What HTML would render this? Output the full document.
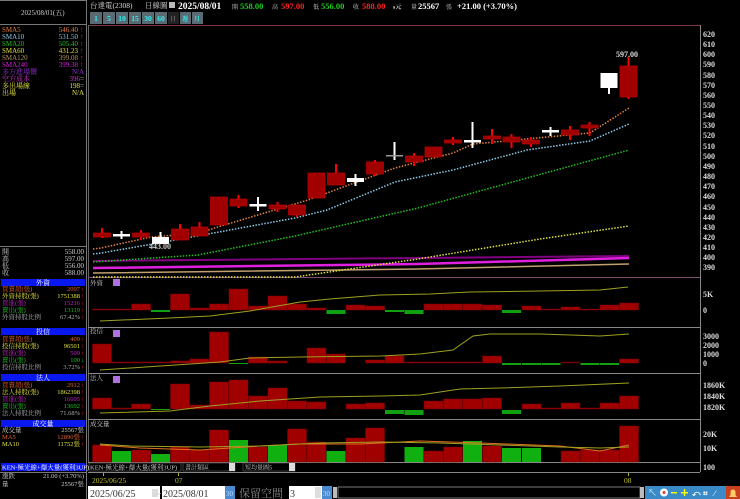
<!DOCTYPE html>
<html><head><meta charset="utf-8"><style>
html,body{margin:0;padding:0;background:#000;width:740px;height:499px;overflow:hidden}
svg{display:block}
text{font-family:"Liberation Serif","Noto Serif CJK SC","Noto Sans CJK TC",serif;}
.a{font-family:"Liberation Sans",sans-serif;font-weight:bold;font-size:8px;fill:#ddd}
.s{font-size:7px}
</style></head><body>
<svg width="740" height="499" viewBox="0 0 740 499" xmlns="http://www.w3.org/2000/svg">
<rect width="740" height="499" fill="#000"/>
<!-- left panel frames -->
<line x1="86.5" y1="0" x2="86.5" y2="499" stroke="#777"/>
<line x1="0" y1="24.5" x2="86" y2="24.5" stroke="#777"/>
<line x1="0" y1="0.5" x2="86" y2="0.5" stroke="#777"/>
<text x="21" y="15" class="s" fill="#ccc">2025/08/01(五)</text>
<g class="s" font-size="7">
<text x="2" y="32" fill="#e08040">SMA5</text><text x="78" y="32" fill="#e08040" text-anchor="end">546.40</text><text x="80" y="32" fill="#f22">↑</text>
<text x="2" y="39" fill="#8ac8e8">SMA10</text><text x="78" y="39" fill="#8ac8e8" text-anchor="end">531.50</text><text x="80" y="39" fill="#f22">↑</text>
<text x="2" y="46" fill="#20c020">SMA20</text><text x="78" y="46" fill="#20c020" text-anchor="end">505.40</text><text x="80" y="46" fill="#f22">↑</text>
<text x="2" y="53" fill="#e0e040">SMA60</text><text x="78" y="53" fill="#e0e040" text-anchor="end">431.23</text><text x="80" y="53" fill="#f22">↑</text>
<text x="2" y="60" fill="#b09060">SMA120</text><text x="78" y="60" fill="#b09060" text-anchor="end">399.08</text><text x="80" y="60" fill="#f22">↑</text>
<text x="2" y="67" fill="#d020d0">SMA240</text><text x="78" y="67" fill="#d020d0" text-anchor="end">399.38</text><text x="80" y="67" fill="#f22">↑</text>
<text x="2" y="74" fill="#9030d0">多方進場價</text><text x="84" y="74" fill="#9030d0" text-anchor="end">N/A</text>
<text x="2" y="81" fill="#d030d0">空方成本</text><text x="80" y="81" fill="#d030d0" text-anchor="end">396</text><text x="84" y="81" fill="#ccc" text-anchor="end">=</text>
<text x="2" y="88" fill="#e0e040">多出場線</text><text x="80" y="88" fill="#e0e040" text-anchor="end">198</text><text x="84" y="88" fill="#ccc" text-anchor="end">=</text>
<text x="2" y="95" fill="#e0e040">出場</text><text x="84" y="95" fill="#e0e040" text-anchor="end">N/A</text>
</g>
<line x1="0" y1="246.5" x2="86" y2="246.5" stroke="#777"/>
<g font-size="7" fill="#ccc">
<text x="2" y="254">開</text><text x="84" y="254" text-anchor="end">558.00</text>
<text x="2" y="261">高</text><text x="84" y="261" text-anchor="end">597.00</text>
<text x="2" y="268">低</text><text x="84" y="268" text-anchor="end">556.00</text>
<text x="2" y="275">收</text><text x="84" y="275" text-anchor="end">588.00</text>
</g>
<!-- section headers -->
<g>
<rect x="1" y="279" width="84" height="7" fill="#0a18f0"/><text x="43" y="285" font-size="7" fill="#fff" text-anchor="middle">外資</text>
<rect x="1" y="328" width="84" height="7" fill="#0a18f0"/><text x="43" y="334" font-size="7" fill="#fff" text-anchor="middle">投信</text>
<rect x="1" y="374" width="84" height="7" fill="#0a18f0"/><text x="43" y="380" font-size="7" fill="#fff" text-anchor="middle">法人</text>
<rect x="1" y="420" width="84" height="7" fill="#0a18f0"/><text x="43" y="426" font-size="7" fill="#fff" text-anchor="middle">成交量</text>
<rect x="1" y="463" width="84" height="8" fill="#0a18f0"/><text x="2" y="469.5" font-size="6.5" fill="#fff">KEN-極光線+爆大量(獲利3UP)</text>
</g>
<g font-size="6.5">
<text x="2" y="291" fill="#e06030">買賣超(張)</text><text x="80" y="291" fill="#e06030" text-anchor="end">2097</text><text x="81" y="291" fill="#f22">↑</text>
<text x="2" y="298" fill="#e0e040">外資持股(張)</text><text x="80" y="298" fill="#e0e040" text-anchor="end">1751388</text><text x="81" y="298" fill="#f22">↑</text>
<text x="2" y="305" fill="#c020c0">買進(張)</text><text x="80" y="305" fill="#c020c0" text-anchor="end">15216</text><text x="81" y="305" fill="#f22">↑</text>
<text x="2" y="312" fill="#20c020">賣出(張)</text><text x="80" y="312" fill="#20c020" text-anchor="end">13119</text><text x="81" y="312" fill="#f22">↑</text>
<text x="2" y="319" fill="#aaa">外資持股比例</text><text x="80" y="319" fill="#aaa" text-anchor="end">67.42%</text><text x="81" y="319" fill="#f22">↑</text>
<text x="2" y="341" fill="#e06030">買賣超(張)</text><text x="80" y="341" fill="#e06030" text-anchor="end">409</text><text x="81" y="341" fill="#f22">↑</text>
<text x="2" y="348" fill="#e0e040">投信持股(張)</text><text x="80" y="348" fill="#e0e040" text-anchor="end">96501</text><text x="81" y="348" fill="#f22">↑</text>
<text x="2" y="355" fill="#c020c0">買進(張)</text><text x="80" y="355" fill="#c020c0" text-anchor="end">509</text><text x="81" y="355" fill="#f22">↑</text>
<text x="2" y="362" fill="#20c020">賣出(張)</text><text x="80" y="362" fill="#20c020" text-anchor="end">100</text><text x="81" y="362" fill="#2c2">↓</text>
<text x="2" y="369" fill="#aaa">投信持股比例</text><text x="80" y="369" fill="#aaa" text-anchor="end">3.72%</text><text x="81" y="369" fill="#f22">↑</text>
<text x="2" y="387" fill="#e06030">買賣超(張)</text><text x="80" y="387" fill="#e06030" text-anchor="end">2912</text><text x="81" y="387" fill="#f22">↑</text>
<text x="2" y="394" fill="#e0e040">法人持股(張)</text><text x="80" y="394" fill="#e0e040" text-anchor="end">1862398</text><text x="81" y="394" fill="#f22">↑</text>
<text x="2" y="401" fill="#c020c0">買進(張)</text><text x="80" y="401" fill="#c020c0" text-anchor="end">16605</text><text x="81" y="401" fill="#f22">↑</text>
<text x="2" y="408" fill="#20c020">賣出(張)</text><text x="80" y="408" fill="#20c020" text-anchor="end">13692</text><text x="81" y="408" fill="#f22">↑</text>
<text x="2" y="415" fill="#aaa">法人持股比例</text><text x="80" y="415" fill="#aaa" text-anchor="end">71.68%</text><text x="81" y="415" fill="#f22">↑</text>
<text x="2" y="432" fill="#ccc">成交量</text><text x="84" y="432" fill="#ccc" text-anchor="end">25567張</text>
<text x="2" y="439" fill="#e06030">MA5</text><text x="80" y="439" fill="#e06030" text-anchor="end">12890張</text><text x="81" y="439" fill="#f22">↑</text>
<text x="2" y="446" fill="#e0e040">MA10</text><text x="80" y="446" fill="#e0e040" text-anchor="end">11752張</text><text x="81" y="446" fill="#f22">↑</text>
<text x="2" y="478" fill="#ccc">漲跌</text><text x="84" y="478" fill="#ccc" text-anchor="end">21.00 (+3.70%)</text>
<text x="2" y="486" fill="#ccc">量</text><text x="84" y="486" fill="#ccc" text-anchor="end">25567張</text>
</g>
<line x1="0" y1="472.5" x2="86" y2="472.5" stroke="#777"/>

<!-- top bar -->
<g font-size="7.5" fill="#ddd">
<text x="90" y="8">台達電(2308)</text>
<text x="145" y="8">日線圖</text>
</g>
<rect x="169" y="2" width="6" height="6" fill="#bbb"/>
<g font-family="Liberation Sans" font-weight="bold" font-size="8.5">
<text x="178" y="9" fill="#fff" font-size="9.5">2025/08/01</text>
<text x="232" y="9" fill="#ccc" font-size="6" font-weight="normal">開</text><text x="240" y="9" fill="#2c2">558.00</text>
<text x="272" y="9" fill="#ccc" font-size="6" font-weight="normal">高</text><text x="281" y="9" fill="#f22">597.00</text>
<text x="313" y="9" fill="#ccc" font-size="6" font-weight="normal">低</text><text x="321" y="9" fill="#2c2">556.00</text>
<text x="353" y="9" fill="#ccc" font-size="6" font-weight="normal">收</text><text x="362" y="9" fill="#f22">588.00</text>
<text x="393" y="9" fill="#ccc" font-size="6">s元</text>
<text x="411" y="9" fill="#ccc" font-size="6" font-weight="normal">量</text><text x="418" y="9" fill="#fff">25567</text>
<text x="446" y="9" fill="#ccc" font-size="6" font-weight="normal">張</text>
<text x="457" y="9" fill="#fff">+21.00 (+3.70%)</text>
</g>
<g font-family="Liberation Sans" font-weight="bold" font-size="7.5" fill="#3ee">
<rect x="90" y="12" width="12" height="12" fill="#5a6a72"/><text x="96" y="21" text-anchor="middle">1</text>
<rect x="103" y="12" width="12" height="12" fill="#5a6a72"/><text x="109" y="21" text-anchor="middle">5</text>
<rect x="116" y="12" width="12" height="12" fill="#5a6a72"/><text x="122" y="21" text-anchor="middle">10</text>
<rect x="129" y="12" width="12" height="12" fill="#5a6a72"/><text x="135" y="21" text-anchor="middle">15</text>
<rect x="142" y="12" width="12" height="12" fill="#5a6a72"/><text x="148" y="21" text-anchor="middle">30</text>
<rect x="155" y="12" width="12" height="12" fill="#5a6a72"/><text x="161" y="21" text-anchor="middle">60</text>
<rect x="168" y="12" width="11" height="12" fill="#222"/><text x="173" y="21" text-anchor="middle" font-size="6" fill="#666">日</text>
<rect x="180" y="12" width="11" height="12" fill="#5a6a72"/><text x="185" y="21" text-anchor="middle" font-size="6">週</text>
<rect x="192" y="12" width="11" height="12" fill="#5a6a72"/><text x="197" y="21" text-anchor="middle" font-size="6">月</text>
</g>

<!-- chart frames -->
<line x1="88" y1="25.5" x2="700" y2="25.5" stroke="#803050"/>
<line x1="88.5" y1="25" x2="88.5" y2="462" stroke="#666"/>
<line x1="700.5" y1="25" x2="700.5" y2="472" stroke="#888"/>
<line x1="88" y1="277.5" x2="700" y2="277.5" stroke="#805070"/>
<line x1="88" y1="327.5" x2="700" y2="327.5" stroke="#888"/>
<line x1="88" y1="373.5" x2="700" y2="373.5" stroke="#888"/>
<line x1="88" y1="419.5" x2="700" y2="419.5" stroke="#888"/>
<line x1="88" y1="462.5" x2="700" y2="462.5" stroke="#888"/>
<line x1="88" y1="472.5" x2="700" y2="472.5" stroke="#888"/>

<!-- price axis -->
<g class="a">
<text x="703" y="37">620</text><text x="703" y="47">610</text><text x="703" y="57">600</text><text x="703" y="67">590</text><text x="703" y="78">580</text><text x="703" y="88">570</text><text x="703" y="98">560</text><text x="703" y="108">550</text><text x="703" y="118">540</text><text x="703" y="128">530</text><text x="703" y="138">520</text><text x="703" y="149">510</text><text x="703" y="159">500</text><text x="703" y="169">490</text><text x="703" y="179">480</text><text x="703" y="189">470</text><text x="703" y="199">460</text><text x="703" y="210">450</text><text x="703" y="220">440</text><text x="703" y="230">430</text><text x="703" y="240">420</text><text x="703" y="250">410</text><text x="703" y="260">400</text><text x="703" y="270">390</text>
<text x="703" y="297">5K</text><text x="703" y="313">0</text>
<text x="703" y="339">3000</text><text x="703" y="348">2000</text><text x="703" y="357">1000</text><text x="703" y="366">0</text>
<text x="703" y="388">1860K</text><text x="703" y="399">1840K</text><text x="703" y="410">1820K</text>
<text x="703" y="437">20K</text><text x="703" y="451">10K</text><text x="703" y="470">100</text>
</g>

<!-- long MA lines -->
<polyline points="93,261 629,256" fill="none" stroke="#800080" stroke-width="2"/>
<polyline points="93,268 418,264 629,258" fill="none" stroke="#e020e0" stroke-width="2.5"/>
<polyline points="93,273 418,269 629,264" fill="none" stroke="#c0a070" stroke-width="1.5"/>
<g fill="none" stroke-width="1.5" stroke-dasharray="1.5,1.5">
<polyline points="93,277 295,277 418,259 540,239 629,226" stroke="#e0e040"/>
<polyline points="93,262 198,255 295,236 418,208 629,150" stroke="#20c020"/>
<polyline points="93,254 101,253 170,241 295,218 327,210 395,182 453,170 527,150 590,141 629,124" stroke="#8ac8e8"/>
<polyline points="93,249 101,248 151,237 199,233 221,226 308,200 395,168 453,153 473,144 590,133 629,108" stroke="#e08040"/>
</g>

<!-- candles -->
<g stroke-width="2">
<g stroke="#f00">
<line x1="102" y1="228" x2="102" y2="238"/><line x1="141" y1="230" x2="141" y2="240"/><line x1="180" y1="224" x2="180" y2="240"/><line x1="199.5" y1="222" x2="199.5" y2="236"/><line x1="238.5" y1="195" x2="238.5" y2="208"/><line x1="277.5" y1="202" x2="277.5" y2="212"/><line x1="297" y1="205" x2="297" y2="217"/><line x1="336" y1="164" x2="336" y2="185"/><line x1="375" y1="160" x2="375" y2="176"/><line x1="414" y1="153" x2="414" y2="166"/><line x1="453" y1="137" x2="453" y2="145"/><line x1="492" y1="129" x2="492" y2="144"/><line x1="511.5" y1="134" x2="511.5" y2="148"/><line x1="531" y1="137" x2="531" y2="147"/><line x1="570" y1="126" x2="570" y2="140"/><line x1="589.5" y1="122" x2="589.5" y2="136"/><line x1="628.5" y1="57" x2="628.5" y2="99"/>
</g>
<g stroke="#fff">
<line x1="121.5" y1="231" x2="121.5" y2="239"/><line x1="160.5" y1="232" x2="160.5" y2="244"/><line x1="258" y1="197" x2="258" y2="211"/><line x1="355.5" y1="174" x2="355.5" y2="186"/><line x1="394.5" y1="142" x2="394.5" y2="160"/><line x1="472.5" y1="122" x2="472.5" y2="148"/><line x1="550.5" y1="127" x2="550.5" y2="136"/><line x1="609" y1="73" x2="609" y2="94"/>
</g>
</g>
<g fill="#a00000" stroke="#c00000" stroke-width="0.7">
<rect x="93.5" y="233" width="17" height="4"/><rect x="132.5" y="233" width="17" height="4"/><rect x="171.5" y="229" width="17" height="11"/><rect x="191" y="227" width="17" height="9"/><rect x="210.5" y="197" width="17" height="28"/><rect x="230" y="199" width="17" height="7"/><rect x="269" y="205" width="17" height="4"/><rect x="288.5" y="205" width="17" height="10"/><rect x="308" y="173" width="17" height="25"/><rect x="327.5" y="173" width="17" height="12"/><rect x="366.5" y="162" width="17" height="12"/><rect x="405.5" y="156" width="17" height="6"/><rect x="425" y="147" width="17" height="10"/><rect x="444.5" y="140" width="17" height="3"/><rect x="483.5" y="136" width="17" height="3"/><rect x="503" y="137" width="17" height="5"/><rect x="522.5" y="140" width="17" height="4"/><rect x="561.5" y="130" width="17" height="5"/><rect x="581" y="125" width="17" height="3"/><rect x="620" y="66" width="17" height="31"/>
</g>
<g fill="#fff">
<rect x="113" y="234" width="17" height="2.5"/><rect x="152" y="237" width="17" height="7"/><rect x="249.5" y="204" width="17" height="2.5"/><rect x="347" y="178" width="17" height="4"/><rect x="386" y="155" width="17" height="1.5" fill="#999"/><rect x="464" y="140" width="17" height="2.5"/><rect x="542" y="130" width="17" height="2.5"/><rect x="600.5" y="73" width="17" height="15"/>
</g>
<text x="149" y="249" font-family="Liberation Sans" font-size="8" font-weight="bold" fill="#ccc">443.00</text>
<text x="616" y="57" font-family="Liberation Sans" font-size="8" font-weight="bold" fill="#ddd">597.00</text>

<!-- sub panel labels -->
<g font-size="6.5" fill="#ccc">
<text x="90" y="285">外資</text><rect x="113" y="279" width="7" height="7" fill="#b070e0"/>
<text x="90" y="333">投信</text><rect x="113" y="330" width="7" height="7" fill="#b070e0"/>
<text x="90" y="380">法人</text><rect x="113" y="376" width="7" height="7" fill="#b070e0"/>
<text x="90" y="426">成交量</text>
</g>

<!-- 外資 bars zero 310 -->
<g fill="#a00000" stroke="#700" stroke-width="0.5">
<rect x="92.5" y="309" width="19" height="1"/><rect x="112" y="309" width="19" height="1"/><rect x="131.5" y="304" width="19" height="6"/><rect x="170.5" y="294" width="19" height="16"/><rect x="190" y="308" width="19" height="2"/><rect x="209.5" y="304" width="19" height="6"/><rect x="229" y="289" width="19" height="21"/><rect x="248.5" y="306" width="19" height="4"/><rect x="268" y="296" width="19" height="14"/><rect x="287.5" y="304" width="19" height="6"/><rect x="307" y="308" width="19" height="2"/><rect x="346" y="305" width="19" height="5"/><rect x="365.5" y="306" width="19" height="4"/><rect x="424" y="304" width="19" height="6"/><rect x="443.5" y="304" width="19" height="6"/><rect x="463" y="304" width="19" height="6"/><rect x="482.5" y="305" width="19" height="5"/><rect x="522" y="306" width="19" height="4"/><rect x="541.5" y="309" width="19" height="1"/><rect x="561" y="307" width="19" height="3"/><rect x="580.5" y="309" width="19" height="1"/><rect x="600" y="305" width="19" height="5"/><rect x="619.5" y="303" width="19" height="7"/>
</g>
<g fill="#10a010">
<rect x="151" y="310" width="19" height="2"/><rect x="326.5" y="310" width="19" height="4"/><rect x="385" y="310" width="19" height="2"/><rect x="404.5" y="310" width="19" height="4"/><rect x="502" y="310" width="19" height="3"/>
</g>
<polyline points="100,321 170,318 210,316 250,311 300,302 330,299 380,295 430,294 470,292 540,291 600,290 628,287" fill="none" stroke="#a0a020" stroke-width="1"/>

<!-- 投信 zero 363 -->
<g fill="#a00000" stroke="#700" stroke-width="0.5">
<rect x="92.5" y="344" width="19" height="19"/><rect x="112" y="362" width="19" height="1"/><rect x="131.5" y="362" width="19" height="1"/><rect x="151" y="362" width="19" height="1"/><rect x="170.5" y="361" width="19" height="2"/><rect x="190" y="359" width="19" height="4"/><rect x="209.5" y="332" width="19" height="31"/><rect x="248.5" y="357" width="19" height="6"/><rect x="268" y="361" width="19" height="2"/><rect x="307" y="348" width="19" height="15"/><rect x="326.5" y="354" width="19" height="9"/><rect x="365.5" y="360" width="19" height="3"/><rect x="385" y="356" width="19" height="7"/><rect x="404.5" y="362" width="19" height="1"/><rect x="424" y="362" width="19" height="1"/><rect x="443.5" y="362" width="19" height="1"/><rect x="463" y="362" width="19" height="1"/><rect x="482.5" y="356" width="19" height="7"/><rect x="561" y="362" width="19" height="1" fill="#600"/><rect x="619.5" y="359" width="19" height="4"/>
</g>
<g fill="#10a010">
<rect x="229" y="363" width="19" height="1"/><rect x="502" y="363" width="19" height="2"/><rect x="522" y="363" width="19" height="2"/><rect x="541.5" y="363" width="19" height="2"/><rect x="580.5" y="363" width="19" height="2"/><rect x="600" y="363" width="19" height="2"/>
</g>
<polyline points="100,370 220,362 250,358 300,357 380,356 420,354 453,350 473,336 490,334 540,334 600,336 629,334" fill="none" stroke="#a0a020" stroke-width="1"/>

<!-- 法人 zero 409 -->
<g fill="#a00000" stroke="#700" stroke-width="0.5">
<rect x="92.5" y="398" width="19" height="11"/><rect x="112" y="408" width="19" height="1"/><rect x="131.5" y="404" width="19" height="5"/><rect x="170.5" y="384" width="19" height="25"/><rect x="190" y="405" width="19" height="4"/><rect x="209.5" y="382" width="19" height="27"/><rect x="229" y="380" width="19" height="29"/><rect x="248.5" y="396" width="19" height="13"/><rect x="268" y="388" width="19" height="21"/><rect x="287.5" y="401" width="19" height="8"/><rect x="307" y="402" width="19" height="7"/><rect x="346" y="404" width="19" height="5"/><rect x="365.5" y="403" width="19" height="6"/><rect x="424" y="401" width="19" height="8"/><rect x="443.5" y="399" width="19" height="10"/><rect x="463" y="399" width="19" height="10"/><rect x="482.5" y="398" width="19" height="11"/><rect x="522" y="404" width="19" height="5"/><rect x="541.5" y="408" width="19" height="1"/><rect x="561" y="403" width="19" height="6"/><rect x="580.5" y="408" width="19" height="1"/><rect x="600" y="403" width="19" height="6"/><rect x="619.5" y="396" width="19" height="13"/>
</g>
<g fill="#10a010">
<rect x="151" y="409" width="19" height="1"/><rect x="385" y="410" width="19" height="4"/><rect x="404.5" y="410" width="19" height="5"/><rect x="502" y="410" width="19" height="4"/>
</g>
<polyline points="100,413 170,411 210,406 260,401 320,397 380,396 420,395 460,389 500,388 560,386 629,383" fill="none" stroke="#a0a020" stroke-width="1"/>

<!-- 成交量 base 462 -->
<g fill="#a00000" stroke="#700" stroke-width="0.5">
<rect x="92.5" y="445" width="19" height="17"/><rect x="131.5" y="450" width="19" height="12"/><rect x="170.5" y="447" width="19" height="15"/><rect x="190" y="450" width="19" height="12"/><rect x="209.5" y="430" width="19" height="32"/><rect x="248.5" y="447" width="19" height="15"/><rect x="287.5" y="429" width="19" height="33"/><rect x="307" y="442" width="19" height="20"/><rect x="346" y="438" width="19" height="24"/><rect x="365.5" y="428" width="19" height="34"/><rect x="424" y="451" width="19" height="11"/><rect x="443.5" y="447" width="19" height="15"/><rect x="482.5" y="446" width="19" height="16"/><rect x="561" y="451" width="19" height="11"/><rect x="580.5" y="450" width="19" height="12"/><rect x="600" y="450" width="19" height="12"/><rect x="619.5" y="426" width="19" height="36"/>
</g>
<g fill="#10b010">
<rect x="112" y="451" width="19" height="11"/><rect x="151" y="454" width="19" height="8"/><rect x="229" y="440" width="19" height="22"/><rect x="268" y="445" width="19" height="17"/><rect x="326.5" y="451" width="19" height="11"/><rect x="404.5" y="447" width="19" height="15"/><rect x="463" y="441" width="19" height="21"/><rect x="502" y="448" width="19" height="14"/><rect x="522" y="448" width="19" height="14"/>
</g>
<polyline points="100,445 140,448 200,450 260,446 300,444 360,444 420,441 480,443 560,446 600,451 629,445" fill="none" stroke="#e07020" stroke-width="1"/>
<polyline points="100,444 130,446 200,447 260,446 320,443 380,442 440,443 500,445 560,447 600,448 629,447" fill="none" stroke="#a0a020" stroke-width="1"/>

<!-- toolbar row -->
<rect x="89" y="463" width="92" height="8" fill="#000" stroke="#777" stroke-width="0.5"/>
<text x="90" y="469.5" font-size="6.5" fill="#ccc">KEN-極光線+爆大量(獲利3UP)</text>
<rect x="183" y="463" width="52" height="8" fill="#000" stroke="#777" stroke-width="0.5"/><text x="185" y="469.5" font-size="6" fill="#ccc">書計類區</text><rect x="229" y="463" width="6" height="8" fill="#ddd"/>
<rect x="243" y="463" width="52" height="8" fill="#000" stroke="#777" stroke-width="0.5"/><text x="245" y="469.5" font-size="6" fill="#ccc">短均量圖5</text><rect x="289" y="463" width="6" height="8" fill="#ddd"/>

<!-- date row -->
<line x1="103.5" y1="473" x2="103.5" y2="476" stroke="#aa3"/>
<line x1="178.5" y1="473" x2="178.5" y2="476" stroke="#aa3"/>
<line x1="628.5" y1="473" x2="628.5" y2="476" stroke="#aa3"/>
<g font-family="Liberation Sans" font-size="7.5" fill="#c0c020">
<text x="92" y="483">2025/06/25</text><text x="175" y="483">07</text><text x="624" y="483">08</text>
</g>

<!-- bottom controls -->
<rect x="88" y="486" width="72" height="13" fill="#fff"/><text x="90" y="497" font-size="10" fill="#333">2025/06/25</text><rect x="152" y="489" width="6" height="8" fill="#ddd"/>
<text x="156" y="497" font-size="9" fill="#ccc">~</text>
<rect x="162" y="486" width="72" height="13" fill="#fff"/><text x="163" y="497" font-size="10" fill="#333">2025/08/01</text><rect x="226" y="489" width="6" height="8" fill="#ddd"/>
<rect x="225" y="486" width="10" height="13" fill="#4a8ad0"/><text x="226" y="496" font-size="7" fill="#bdf">30</text>
<text x="239" y="497" font-size="11" fill="#888">保留空間</text>
<rect x="289" y="486" width="33" height="13" fill="#fff"/><text x="290" y="497" font-size="10" fill="#333">3</text><rect x="315" y="487" width="6" height="11" fill="#ddd"/>
<rect x="322" y="486" width="10" height="13" fill="#4a8ad0"/><text x="323" y="496" font-size="7" fill="#bdf">30</text>
<rect x="333" y="487" width="4" height="11" fill="#bbb"/>
<rect x="338" y="487" width="302" height="11" fill="#000" stroke="#777"/>
<rect x="640" y="487" width="4" height="11" fill="#bbb"/>
<rect x="645" y="486" width="95" height="13" fill="#3a8ac8"/>
<g fill="#fff" font-family="Liberation Sans" font-size="9" font-weight="bold">
<text x="648" y="496">↖</text><circle cx="664" cy="492.5" r="4" fill="#fff"/><circle cx="664" cy="492.5" r="1.5" fill="#e33"/>
<rect x="671" y="492" width="6" height="1.5" fill="#ff0"/><rect x="681" y="492" width="7" height="1.5" fill="#ff0"/><rect x="683.8" y="489" width="1.5" height="7" fill="#ff0"/>
<text x="692" y="496" font-size="8">⤺</text><text x="703" y="496" font-size="8">⌗</text><text x="714" y="496" font-size="8">⁄</text>
</g>
<rect x="726" y="486" width="14" height="13" fill="#c84020"/><path d="M729,497 h8 l-1.5,-2 v-3 a2.5,2.5 0 0 0 -5,0 v3 z" fill="#fc6"/>
</svg>
</body></html>
